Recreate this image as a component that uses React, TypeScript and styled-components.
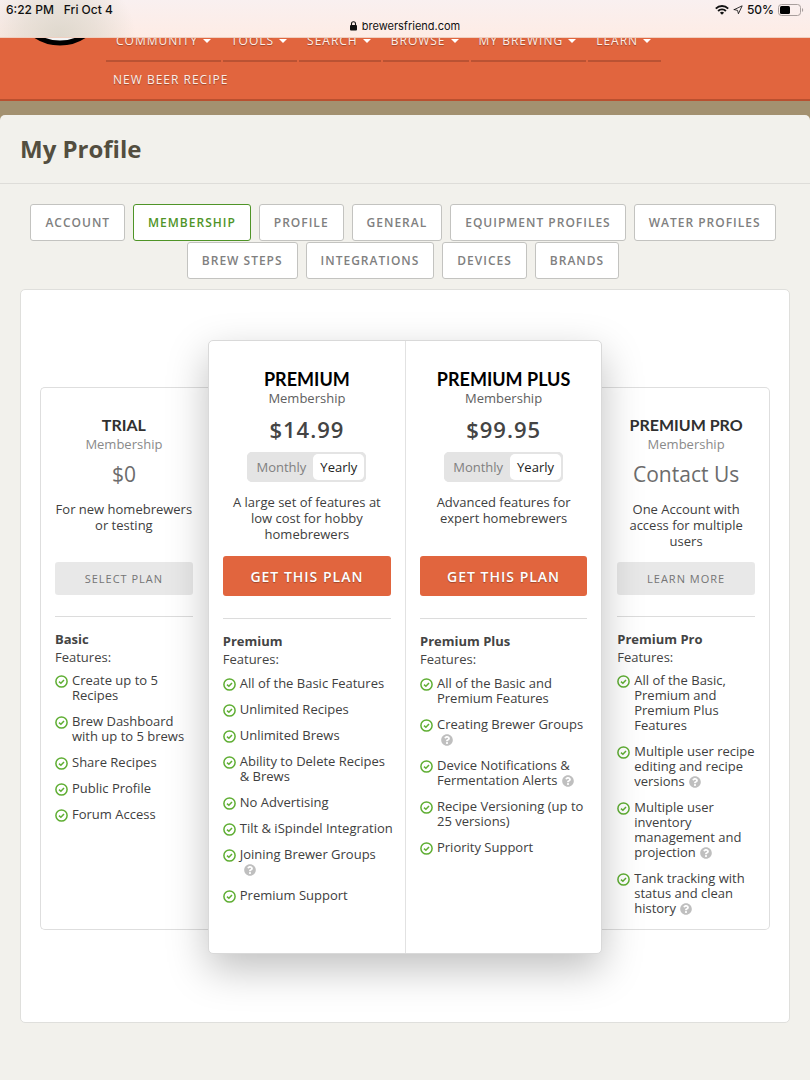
import React, { useState } from "react";
import styled, { createGlobalStyle } from "styled-components";
import { FaQuestionCircle } from "react-icons/fa";
import { Navigation } from "lucide-react";

const GlobalStyle = createGlobalStyle`
  *, *::before, *::after { box-sizing: border-box; }
  body {
    margin: 0;
    background: #f2f1ec;
    font-family: "Open Sans", "Noto Sans", sans-serif;
    color: #404040;
  }
  button, input { font-family: inherit; }
`;

const StatusBar = styled.div`
  position: relative;
  z-index: 2;
  height: 38px;
  padding: 2px 6px 0;
  background:
    radial-gradient(ellipse 76px 70px at 60px 38px, rgba(216, 212, 200, 0.85), rgba(216, 212, 200, 0.5) 50%, rgba(216, 212, 200, 0) 100%),
    linear-gradient(#f9f0f0, #feece5);
  border-bottom: 1px solid #f0cfc0;
  font-family: Inter, "Liberation Sans", sans-serif;
  font-size: 12px;
  color: #111;
`;

const StatusRow = styled.div`
  display: flex;
  justify-content: space-between;
  height: 16px;
  line-height: 16px;
  font-weight: 500;
`;

const StatusGroup = styled.div<{ $gap: number }>`
  display: flex;
  align-items: center;
  gap: ${(p) => p.$gap}px;
`;

const Address = styled.div`
  display: flex;
  justify-content: center;
  align-items: center;
  gap: 5px;
  height: 16px;
  font-size: 11px;
  line-height: 16px;
`;

const Header = styled.header`
  display: flex;
  height: 63px;
  overflow: hidden;
  background: #e1653e;
  border-bottom: 2px solid #b9502f;
`;

const LogoLink = styled.a`
  flex: none;
  width: 106px;
  padding-left: 13px;
  margin-top: -86px;
`;

const Nav = styled.nav`
  margin-top: -13px;
`;

const NavRow = styled.div`
  display: flex;
  gap: 2px;
`;

const NavLink = styled.a`
  display: flex;
  align-items: center;
  gap: 5px;
  height: 37px;
  padding: 0 10px 3px 8px;
  border-bottom: 2px solid #ba5233;
  font-size: 12px;
  line-height: 18px;
  letter-spacing: 1px;
  color: #fdeee8;
  text-decoration: none;
  text-shadow: 0 1px 1px rgba(0, 0, 0, 0.3);
  white-space: nowrap;

  ${NavRow} > &:first-child {
    padding-left: 10px;
  }
`;

const SecondaryLink = styled(NavLink)`
  height: 35px;
  border-bottom: 0;

  ${NavRow} > &:first-child {
    padding: 0 7px;
  }
`;

const Caret = styled.span`
  border: 4px solid transparent;
  border-top-color: #fff;
  border-bottom: 0;
`;

const Backdrop = styled.div`
  padding-top: 14px;
  background: #a39170;
`;

const Sheet = styled.main`
  padding-bottom: 58px;
  background: #f2f1ec;
  border-radius: 5px 5px 0 0;
`;

const TitleBar = styled.div`
  padding: 18px 20px;
  border-bottom: 1px solid #deddd9;
`;

const Title = styled.h1`
  margin: 0;
  font-size: 24px;
  line-height: 32px;
  font-weight: 700;
  color: #534e3f;
`;

const Tabs = styled.nav`
  display: flex;
  flex-wrap: wrap;
  justify-content: center;
  gap: 1px 8px;
  padding: 20px 24px 0 20px;
`;

const Tab = styled.a<{ $active: boolean }>`
  height: 37px;
  padding: 0 14px;
  border: 1px solid ${(p) => (p.$active ? "#4f9427" : "#c3c3c0")};
  border-radius: 3px;
  background: #fff;
  font-size: 12px;
  line-height: 35px;
  font-weight: 600;
  letter-spacing: 1px;
  color: ${(p) => (p.$active ? "#4f9427" : "#808080")};
  text-decoration: none;
  white-space: nowrap;
`;

const Panel = styled.section`
  margin: 10px 20px 0;
  padding: 50px 19px 68px;
  border: 1px solid #dfdfdc;
  border-radius: 5px;
  background: #fff;
`;

const Plans = styled.div`
  display: grid;
  grid-template-columns: 168fr 395fr 168fr;
`;

const SideSlot = styled.div<{ $side: "left" | "right" }>`
  margin: 47px 0 24px;
  padding: 26px 15px 13px;
  border: 1px solid #dedede;
  border-radius: ${(p) => (p.$side === "left" ? "5px 0 0 5px" : "0 5px 5px 0")};
  border-${(p) => (p.$side === "left" ? "right" : "left")}-width: 0;
  padding-${(p) => (p.$side === "left" ? "left" : "right")}: 14px;
`;

const Featured = styled.div`
  position: relative;
  z-index: 1;
  display: grid;
  grid-template-columns: 1fr 1fr;
  border: 1px solid #d9d9d9;
  border-radius: 5px;
  background: #fff;
  box-shadow: 0 15px 40px rgba(0, 0, 0, 0.25);
`;

const FeaturedSlot = styled.div`
  padding: 27px 14px 20px;

  & + & {
    border-left: 1px solid #e2e2e2;
  }
`;

const PlanTitle = styled.h2<{ $large: boolean }>`
  margin: 0;
  font-family: Lato, "Open Sans", sans-serif;
  font-size: ${(p) => (p.$large ? 18 : 16)}px;
  line-height: 22px;
  font-weight: 700;
  text-align: center;
  white-space: nowrap;
  color: ${(p) => (p.$large ? "#000" : "#303030")};
`;

const PlanKind = styled.p<{ $large: boolean }>`
  margin: 0;
  font-size: 13px;
  line-height: 16px;
  text-align: center;
  color: ${(p) => (p.$large ? "#606060" : "#8a8a8a")};
`;

const Price = styled.p<{ $large: boolean }>`
  margin: ${(p) => (p.$large ? 7 : 6)}px 0 0;
  font-size: ${(p) => (p.$large ? 22 : 21)}px;
  line-height: 32px;
  font-weight: ${(p) => (p.$large ? 600 : 400)};
  letter-spacing: ${(p) => (p.$large ? "1px" : "normal")};
  text-align: center;
  white-space: nowrap;
  color: ${(p) => (p.$large ? "#444" : "#6c6c6c")};
`;

const Toggle = styled.fieldset`
  display: flex;
  width: fit-content;
  height: 30px;
  margin: 7px auto 0;
  padding: 1px;
  border: 1px solid #e4e4e4;
  border-radius: 5px;
  background: #e4e4e4;
`;

const ToggleOption = styled.label`
  padding: 0 7px;
  border-radius: 5px;
  font-size: 13px;
  line-height: 26px;
  color: #808080;
  cursor: pointer;

  &:has(input:checked) {
    background: #fff;
    color: #222;
  }

  input {
    position: absolute;
    opacity: 0;
    width: 1px;
    height: 1px;
    margin: 0;
  }
`;

const Summary = styled.p<{ $large: boolean }>`
  margin: ${(p) => (p.$large ? 12 : 11)}px 0 0;
  min-height: 48px;
  font-size: 13px;
  line-height: 16px;
  text-align: center;
  color: #404040;
`;

const PlainButton = styled.button`
  display: block;
  width: 100%;
  height: 33px;
  margin-top: 13px;
  padding: 0;
  border: 0;
  border-radius: 3px;
  background: rgba(0, 0, 0, 0.09);
  font-size: 11px;
  letter-spacing: 1px;
  color: #757575;
`;

const AccentButton = styled(PlainButton)`
  height: 40px;
  margin-top: 14px;
  background: #e1653e;
  font-size: 14px;
  font-weight: 600;
  color: #fff;
  text-shadow: 0 1px 1px rgba(0, 0, 0, 0.3);
`;

const Rule = styled.hr<{ $large: boolean }>`
  margin: ${(p) => (p.$large ? 22 : 21)}px 0 13px;
  border: 0;
  border-top: 1px solid #dcdcdc;
`;

const PlanName = styled.h3`
  margin: 0;
  font-size: 13px;
  line-height: 18px;
  font-weight: 700;
  color: #444;
`;

const FeaturesLabel = styled.p`
  margin: 0;
  font-size: 13px;
  line-height: 18px;
  color: #444;
`;

const FeatureList = styled.ul<{ $large: boolean }>`
  display: grid;
  gap: 11px;
  margin: ${(p) => (p.$large ? 8 : 7)}px -4px 0 0;
  padding: 0;
  list-style: none;
`;

const Feature = styled.li`
  display: grid;
  grid-template-columns: 13px minmax(0, 1fr);
  gap: 4px;
  font-size: 13px;
  line-height: 15px;
  color: #404040;

  > svg {
    margin-top: 2px;
  }
`;

const HelpButton = styled.button`
  display: inline-block;
  width: 12px;
  height: 12px;
  margin: 0 4px;
  padding: 0;
  border: 0;
  background: none;
  color: #bfbfbf;
  vertical-align: -2px;

  svg {
    display: block;
  }
`;

const CheckIcon = () => (
  <svg width="13" height="13" viewBox="0 0 13 13" fill="none" stroke="#5fae33" aria-hidden="true">
    <circle cx="6.5" cy="6.5" r="5.6" strokeWidth="1.5" />
    <path d="M4 6.6 L5.9 8.3 L9 5" strokeWidth="1.5" />
  </svg>
);

const LockIcon = () => (
  <svg width="7" height="10" viewBox="0 0 7 10" aria-hidden="true">
    <rect x="0" y="4" width="7" height="5.6" rx="1" fill="#111" />
    <path d="M1.5 4.5V2.8a2 2 0 0 1 4 0v1.7" fill="none" stroke="#111" strokeWidth="1.1" />
  </svg>
);

const WifiIcon = () => (
  <svg width="14" height="10" viewBox="0 0 14 10" fill="none" stroke="#111" strokeWidth="1.9" aria-hidden="true">
    <path d="M0.8 3.6a8.8 8.8 0 0 1 12.4 0" />
    <path d="M3.1 6a5.5 5.5 0 0 1 7.8 0" />
    <path d="M7 9.8L4.9 7.7a3 3 0 0 1 4.2 0z" fill="#111" stroke="none" />
  </svg>
);

const BatteryIcon = () => (
  <svg width="26" height="12" viewBox="0 0 26 12" aria-hidden="true">
    <rect x="0.5" y="0.5" width="22" height="11" rx="3" fill="none" stroke="#a89f9d" />
    <rect x="2" y="2" width="10" height="8" rx="1.5" fill="#000" />
    <path d="M24 4v4c1.6-.6 1.6-3.4 0-4z" fill="#a89f9d" />
  </svg>
);

const Logo = () => (
  <svg width="94" height="94" viewBox="0 0 94 94" aria-hidden="true">
    <circle cx="47" cy="47" r="44" fill="#f4f4f4" stroke="#000" strokeWidth="5" />
  </svg>
);

type FeatureItem = { text: string; help?: boolean };
type Plan = {
  id: string;
  title: string;
  name: string;
  price: string;
  summary: string;
  action: string;
  features: FeatureItem[];
};

const trial: Plan = {
  id: "trial",
  title: "TRIAL",
  name: "Basic",
  price: "$0",
  summary: "For new homebrewers or testing",
  action: "SELECT PLAN",
  features: [
    { text: "Create up to 5 Recipes" },
    { text: "Brew Dashboard with up to 5 brews" },
    { text: "Share Recipes" },
    { text: "Public Profile" },
    { text: "Forum Access" },
  ],
};

const premium: Plan = {
  id: "premium",
  title: "PREMIUM",
  name: "Premium",
  price: "$14.99",
  summary: "A large set of features at low cost for hobby homebrewers",
  action: "GET THIS PLAN",
  features: [
    { text: "All of the Basic Features" },
    { text: "Unlimited Recipes" },
    { text: "Unlimited Brews" },
    { text: "Ability to Delete Recipes & Brews" },
    { text: "No Advertising" },
    { text: "Tilt & iSpindel Integration" },
    { text: "Joining Brewer Groups", help: true },
    { text: "Premium Support" },
  ],
};

const plus: Plan = {
  id: "plus",
  title: "PREMIUM PLUS",
  name: "Premium Plus",
  price: "$99.95",
  summary: "Advanced features for expert homebrewers",
  action: "GET THIS PLAN",
  features: [
    { text: "All of the Basic and Premium Features" },
    { text: "Creating Brewer Groups", help: true },
    { text: "Device Notifications & Fermentation Alerts", help: true },
    { text: "Recipe Versioning (up to 25 versions)" },
    { text: "Priority Support" },
  ],
};

const pro: Plan = {
  id: "pro",
  title: "PREMIUM PRO",
  name: "Premium Pro",
  price: "Contact Us",
  summary: "One Account with access for multiple users",
  action: "LEARN MORE",
  features: [
    { text: "All of the Basic, Premium and Premium Plus Features" },
    { text: "Multiple user recipe editing and recipe versions", help: true },
    { text: "Multiple user inventory management and projection", help: true },
    { text: "Tank tracking with status and clean history", help: true },
  ],
};

const menus = ["COMMUNITY", "TOOLS", "SEARCH", "BROWSE", "MY BREWING", "LEARN"];
const tabs = [
  "ACCOUNT",
  "MEMBERSHIP",
  "PROFILE",
  "GENERAL",
  "EQUIPMENT PROFILES",
  "WATER PROFILES",
  "BREW STEPS",
  "INTEGRATIONS",
  "DEVICES",
  "BRANDS",
];

function BillingToggle({ id }: { id: string }) {
  const [period, setPeriod] = useState("Yearly");
  return (
    <Toggle aria-label="Billing period">
      {["Monthly", "Yearly"].map((option) => (
        <ToggleOption key={option}>
          <input
            type="radio"
            name={`billing-${id}`}
            checked={period === option}
            onChange={() => setPeriod(option)}
          />
          {option}
        </ToggleOption>
      ))}
    </Toggle>
  );
}

function PlanContent({ plan, large = false }: { plan: Plan; large?: boolean }) {
  const Action = large ? AccentButton : PlainButton;
  return (
    <>
      <PlanTitle $large={large}>{plan.title}</PlanTitle>
      <PlanKind $large={large}>Membership</PlanKind>
      <Price $large={large}>{plan.price}</Price>
      {large && <BillingToggle id={plan.id} />}
      <Summary $large={large}>{plan.summary}</Summary>
      <Action type="button">{plan.action}</Action>
      <Rule $large={large} />
      <PlanName>{plan.name}</PlanName>
      <FeaturesLabel>Features:</FeaturesLabel>
      <FeatureList $large={large}>
        {plan.features.map((f) => (
          <Feature key={f.text}>
            <CheckIcon />
            <span>
              {f.text}
              {f.help && (
                <HelpButton type="button" aria-label={`About ${f.text}`}>
                  <FaQuestionCircle size={12} />
                </HelpButton>
              )}
            </span>
          </Feature>
        ))}
      </FeatureList>
    </>
  );
}

export default function App() {
  return (
    <>
      <GlobalStyle />
      <StatusBar>
        <StatusRow>
          <StatusGroup $gap={10}>
            <span>6:22 PM</span>
            <span>Fri Oct 4</span>
          </StatusGroup>
          <StatusGroup $gap={4}>
            <WifiIcon />
            <Navigation size={10} strokeWidth={2} />
            <StatusGroup $gap={4}>
              <span>50%</span>
              <BatteryIcon />
            </StatusGroup>
          </StatusGroup>
        </StatusRow>
        <Address>
          <LockIcon />
          <span>brewersfriend.com</span>
        </Address>
      </StatusBar>
      <Header>
        <LogoLink href="#home" aria-label="Home">
          <Logo />
        </LogoLink>
        <Nav aria-label="Main">
          <NavRow>
            {menus.map((m) => (
              <NavLink key={m} href="#menu">
                {m}
                <Caret />
              </NavLink>
            ))}
          </NavRow>
          <NavRow>
            <SecondaryLink href="#new-recipe">NEW BEER RECIPE</SecondaryLink>
          </NavRow>
        </Nav>
      </Header>
      <Backdrop>
        <Sheet>
          <TitleBar>
            <Title>My Profile</Title>
          </TitleBar>
          <Tabs aria-label="Profile sections">
            {tabs.map((t) => (
              <Tab key={t} href="#tab" $active={t === "MEMBERSHIP"}>
                {t}
              </Tab>
            ))}
          </Tabs>
          <Panel>
            <Plans>
              <SideSlot $side="left">
                <PlanContent plan={trial} />
              </SideSlot>
              <Featured>
                <FeaturedSlot>
                  <PlanContent plan={premium} large />
                </FeaturedSlot>
                <FeaturedSlot>
                  <PlanContent plan={plus} large />
                </FeaturedSlot>
              </Featured>
              <SideSlot $side="right">
                <PlanContent plan={pro} />
              </SideSlot>
            </Plans>
          </Panel>
        </Sheet>
      </Backdrop>
    </>
  );
}
